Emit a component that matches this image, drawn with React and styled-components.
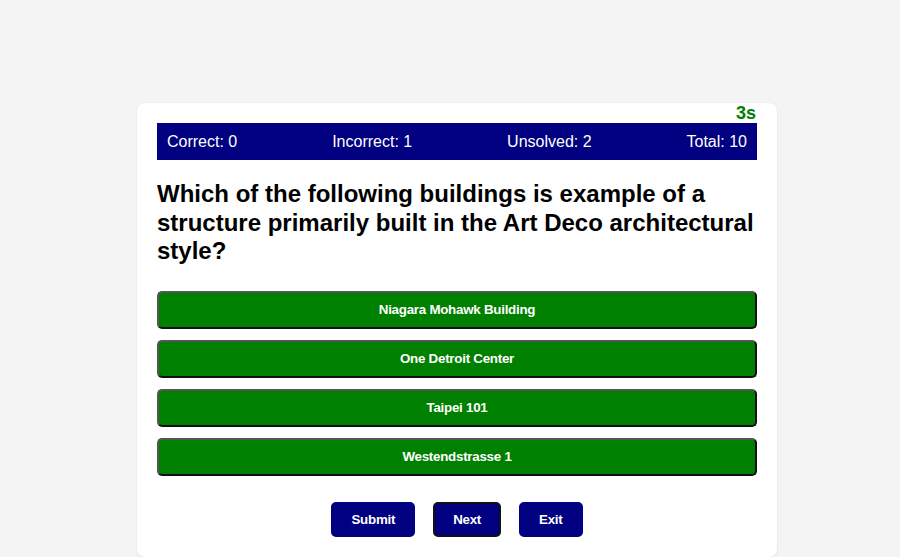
import React from "react";
import styled, { createGlobalStyle } from "styled-components";

const Global = createGlobalStyle`
  html, body { margin: 0; padding: 0; background: #f4f4f4; }
  body { font-family: "Liberation Sans", Arial, sans-serif; }
`;

const Page = styled.div`
  display: flex;
  justify-content: center;
  padding: 103px 0 0 14px;
  min-height: 557px;
  box-sizing: border-box;
`;

const Card = styled.div`
  position: relative;
  width: 640px;
  box-sizing: border-box;
  background: #fff;
  border-radius: 8px;
  box-shadow: 0 1px 3px rgba(0, 0, 0, 0.08);
  padding: 20px 20px 19px;
`;

const Timer = styled.div`
  position: absolute;
  top: 0;
  right: 21px;
  font-size: 18px;
  font-weight: bold;
  line-height: 21px;
  color: #008000;
`;

const StatsBar = styled.div`
  display: flex;
  justify-content: space-between;
  background: #000080;
  color: #fff;
  padding: 10px;
  font-size: 16px;
  line-height: 17px;
`;

const Question = styled.h2`
  margin: 20px 0 25px;
  font-size: 24px;
  line-height: 28.6px;
  font-weight: bold;
  color: #000;
`;

const Options = styled.div`
  display: flex;
  flex-direction: column;
  gap: 11px;
`;

const OptionButton = styled.button`
  display: block;
  width: 100%;
  height: 38px;
  background: #008000;
  color: #fff;
  font-family: "Liberation Sans", Arial, sans-serif;
  font-size: 13.333px;
  font-weight: bold;
  letter-spacing: -0.25px;
  border-radius: 5px;
  border-width: 2px;
  border-style: solid;
  border-color: #555 #111 #111 #555;
  cursor: pointer;
`;

const Actions = styled.div`
  display: flex;
  justify-content: center;
  gap: 18px;
  margin-top: 26px;
`;

const ActionButton = styled.button`
  background: #000080;
  color: #fff;
  font-family: "Liberation Sans", Arial, sans-serif;
  font-size: 13.333px;
  font-weight: bold;
  letter-spacing: -0.25px;
  line-height: 15px;
  padding: 8px 18px;
  border: 2px solid ${(p) => (p.$focused ? "#111" : "#000080")};
  border-radius: 5px;
  cursor: pointer;
`;

const options = [
  "Niagara Mohawk Building",
  "One Detroit Center",
  "Taipei 101",
  "Westendstrasse 1",
];

export default function App() {
  return (
    <>
      <Global />
      <Page>
        <Card>
          <Timer>3s</Timer>
          <StatsBar>
            <span>Correct: 0</span>
            <span>Incorrect: 1</span>
            <span>Unsolved: 2</span>
            <span>Total: 10</span>
          </StatsBar>
          <Question>
            Which of the following buildings is example of a structure primarily built in the Art Deco architectural style?
          </Question>
          <Options>
            {options.map((o) => (
              <OptionButton key={o}>{o}</OptionButton>
            ))}
          </Options>
          <Actions>
            <ActionButton>Submit</ActionButton>
            <ActionButton $focused>Next</ActionButton>
            <ActionButton>Exit</ActionButton>
          </Actions>
        </Card>
      </Page>
    </>
  );
}
